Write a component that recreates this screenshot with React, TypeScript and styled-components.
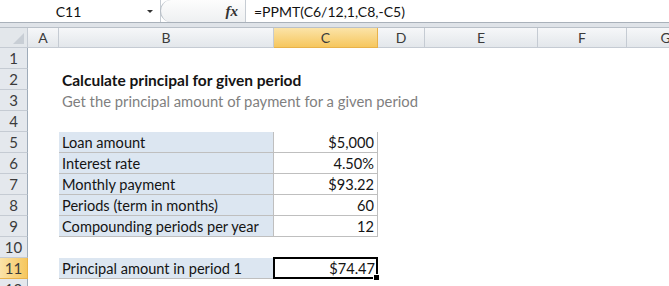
import React from "react";
import styled, {createGlobalStyle, css} from "styled-components";

const GlobalStyle = createGlobalStyle`
  html, body {
    margin: 0;
    padding: 0;
    background: #ffffff;
    overflow: hidden;
  }
  body {
    font-family: Lato, "Open Sans", sans-serif;
  }
`;

const COLS = [28, 31, 215, 104, 47, 113, 89, 78];
const ROW_H = 21;

const Window = styled.div`
  width: 669px;
  height: 286px;
  display: flex;
  flex-direction: column;
  overflow: hidden;
  & > * {
    flex: none;
  }
`;

const FormulaBar = styled.div`
  display: flex;
  height: 22px;
  border-bottom: 1px solid #a9b1ba;
  background: #ffffff;
`;

const NameBox = styled.div`
  width: 160px;
  display: flex;
  align-items: center;
  border-right: 1px solid #c6ccd3;
`;

const NameText = styled.span`
  flex: 1;
  text-align: center;
  font-size: 14px;
  color: #111;
  padding-right: 10px;
`;

const Caret = styled.span`
  width: 0;
  height: 0;
  border-left: 3px solid transparent;
  border-right: 3px solid transparent;
  border-top: 3px solid #333;
  margin-right: 7px;
`;

const FxZone = styled.div`
  width: 86px;
  display: flex;
  align-items: center;
  justify-content: flex-end;
  padding-right: 7px;
  box-sizing: border-box;
  border-right: 1px solid #c6ccd3;
  background: linear-gradient(#fdfdfd, #eef0f2);
  border-radius: 11px 0 0 11px;
  border-left: 1px solid #b8bfc7;
  margin-left: -1px;
`;

const Fx = styled.span`
  font-family: "Liberation Serif", serif;
  font-style: italic;
  font-weight: bold;
  font-size: 15px;
  color: #333;
`;

const FormulaText = styled.div`
  flex: 1;
  padding-left: 8px;
  display: flex;
  align-items: center;
  font-size: 14px;
  color: #111;
`;

const Gap = styled.div`
  height: 4px;
  background: #dfe3e8;
  border-bottom: 1px solid #b9c0c8;
`;

const Sheet = styled.div`
  display: grid;
  grid-template-columns: ${COLS.map((c) => c + "px").join(" ")};
  grid-template-rows: 20px;
  grid-auto-rows: ${ROW_H}px;
`;

const headerBase = css<{ $active?: boolean }>`
  box-sizing: border-box;
  display: flex;
  align-items: center;
  justify-content: center;
  font-size: 14px;
  color: #3b3b3b;
  background: ${({$active}) =>
    $active ? "linear-gradient(#fbe3a8, #f6c75e)" : "linear-gradient(#f6f7f9, #e3e7eb)"};
`;

const Corner = styled.div`
  box-sizing: border-box;
  background: #e3e7eb;
  border-right: 1px solid #c5cbd3;
  border-bottom: 1px solid #c5cbd3;
  position: relative;
  &::after {
    content: "";
    position: absolute;
    right: 3px;
    bottom: 3px;
    width: 0;
    height: 0;
    border-left: 11px solid transparent;
    border-bottom: 11px solid #c8ced5;
  }
`;

const ColHead = styled.div<{ $active?: boolean }>`
  ${headerBase};
  border-right: 1px solid ${({$active}) => ($active ? "#e8b24a" : "#c5cbd3")};
  border-bottom: 1px solid ${({$active}) => ($active ? "#e8b24a" : "#c5cbd3")};
`;

const RowHead = styled.div<{ $active?: boolean }>`
  ${headerBase};
  font-size: 15px;
  background: ${({$active}) => ($active ? "linear-gradient(90deg, #fbe3a8, #f6c75e)" : "#e4e8ed")};
  border-right: 1px solid ${({$active}) => ($active ? "#e8b24a" : "#9eabb9")};
  border-bottom: 1px solid ${({$active}) => ($active ? "#e8b24a" : "#c5cbd3")};
`;

type CellKind = "label" | "value" | "selected";

const Cell = styled.div<{ $kind?: CellKind; $span?: number; $tone?: "title" | "sub" }>`
  box-sizing: border-box;
  display: flex;
  align-items: center;
  white-space: nowrap;
  font-size: 14.6px;
  color: #141414;
  position: relative;
  grid-column: span ${({$span}) => $span ?? 1};
  ${({$tone}) =>
    $tone === "title" &&
    css`
      font-weight: bold;
      font-size: 15.5px;
      padding-left: 3px;
    `}
  ${({$tone}) =>
    $tone === "sub" &&
    css`
      color: #7f7f7f;
      font-size: 14.8px;
      padding-left: 3px;
    `}
  ${({$kind}) =>
    $kind === "label" &&
    css`
      background: #dce6f1;
      border-right: 1px solid #bfbfbf;
      border-bottom: 1px solid #bfbfbf;
      padding-left: 3px;
    `}
  ${({$kind}) =>
    $kind === "value" &&
    css`
      justify-content: flex-end;
      border-right: 1px solid #bfbfbf;
      border-bottom: 1px solid #bfbfbf;
      padding-right: 3px;
    `}
  ${({$kind}) =>
    $kind === "selected" &&
    css`
      justify-content: flex-end;
      border: 2px solid #000;
      margin: -1px 0 0 -1px;
      padding-right: 1px;
    `}
`;

const FillHandle = styled.span`
  position: absolute;
  right: -4px;
  bottom: -4px;
  width: 5px;
  height: 5px;
  background: #000;
  border: 1px solid #fff;
`;

const Blank = styled.div<{ $span?: number }>`
  grid-column: span ${({$span}) => $span ?? 1};
`;

const inputs: [string, string][] = [
  ["Loan amount", "$5,000"],
  ["Interest rate", "4.50%"],
  ["Monthly payment", "$93.22"],
  ["Periods (term in months)", "60"],
  ["Compounding periods per year", "12"],
];

const letters = ["A", "B", "C", "D", "E", "F", "G"];

export default function App() {
  return (
    <Window>
      <GlobalStyle/>
      <FormulaBar>
        <NameBox>
          <NameText>C11</NameText>
          <Caret/>
        </NameBox>
        <FxZone>
          <Fx>fx</Fx>
        </FxZone>
        <FormulaText>=PPMT(C6/12,1,C8,-C5)</FormulaText>
      </FormulaBar>
      <Gap/>
      <Sheet>
        <Corner/>
        {letters.map((l) => (
          <ColHead key={l} $active={l === "C"}>{l}</ColHead>
        ))}

        <RowHead>1</RowHead>
        <Blank $span={7}/>

        <RowHead>2</RowHead>
        <Blank/>
        <Cell $tone="title" $span={6}>Calculate principal for given period</Cell>

        <RowHead>3</RowHead>
        <Blank/>
        <Cell $tone="sub" $span={6}>Get the principal amount of payment for a given period</Cell>

        <RowHead>4</RowHead>
        <Blank $span={7}/>

        {inputs.map(([label, value], i) => (
          <React.Fragment key={label}>
            <RowHead>{5 + i}</RowHead>
            <Blank/>
            <Cell $kind="label">{label}</Cell>
            <Cell $kind="value">{value}</Cell>
            <Blank $span={4}/>
          </React.Fragment>
        ))}

        <RowHead>10</RowHead>
        <Blank $span={7}/>

        <RowHead $active>11</RowHead>
        <Blank/>
        <Cell $kind="label">Principal amount in period 1</Cell>
        <Cell $kind="selected">
          $74.47
          <FillHandle/>
        </Cell>
        <Blank $span={4}/>

        <RowHead>12</RowHead>
        <Blank $span={7}/>
      </Sheet>
    </Window>
  );
}
